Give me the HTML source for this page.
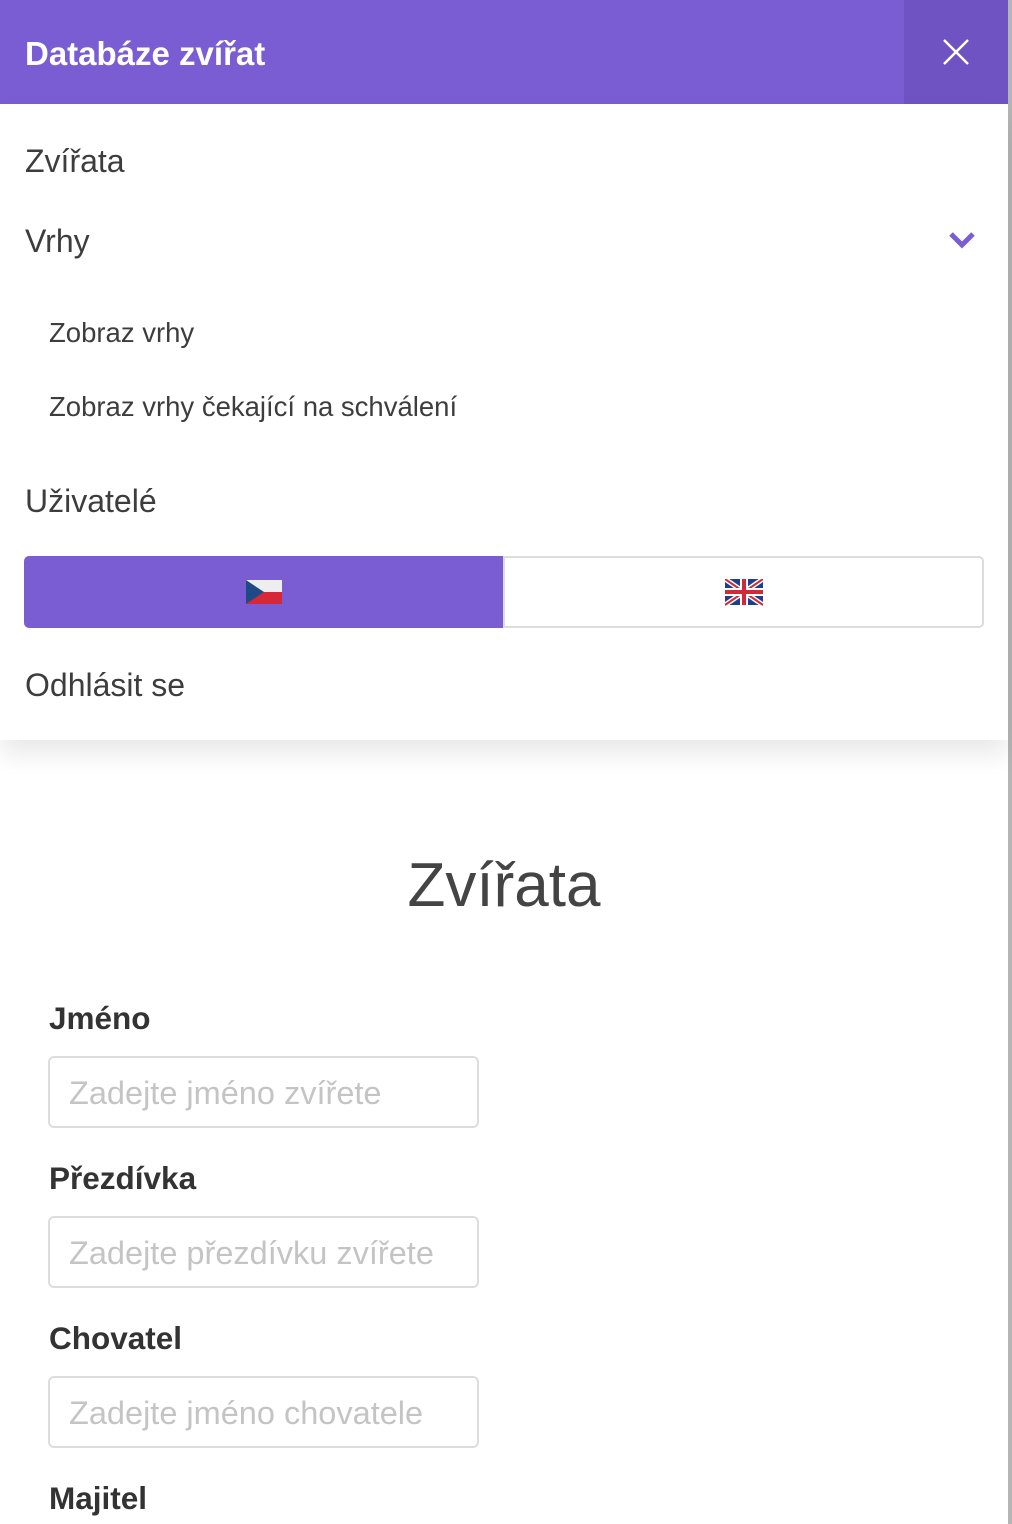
<!DOCTYPE html>
<html><head><meta charset="utf-8"><style>
*{margin:0;padding:0;box-sizing:border-box}
body{width:1012px;height:1524px;overflow:hidden;background:#fff;font-family:"Liberation Sans","DejaVu Sans",sans-serif;color:#3d3d3d;position:relative}
.sb{position:absolute;right:0;top:0;width:4px;height:1524px;background:#b5b5b5}
.hdr{position:absolute;left:0;top:0;width:1008px;height:104px;background:#7a5dd2}
.hdr h1{position:absolute;left:25px;top:35px;font-size:33px;font-weight:bold;color:#fff}
.cls{position:absolute;left:904px;top:0;width:104px;height:104px;background:#7053c3}
.it{position:absolute;left:25px;font-size:32px;color:#3d3d3d}
.sub{position:absolute;left:49px;font-size:27.5px;color:#3d3d3d}
.menu{position:absolute;left:0;top:104px;width:1008px;height:636px;background:#fff;box-shadow:0 14px 24px rgba(0,0,0,.09);z-index:2}
.flag{position:absolute;top:556px;height:72px}
.t{position:absolute;left:0;width:1008px;text-align:center;top:850px;font-size:62px;color:#444}
.lb{position:absolute;left:49px;font-size:31.5px;font-weight:bold;color:#333}
.in{position:absolute;left:48px;width:431px;height:72px;border:2px solid #ddd;border-radius:6px;font-size:32.5px;color:#c4c4c4;padding:17px 0 0 19px}
</style></head><body>
<div class="sb"></div>
<div class="hdr"><h1>Databáze zvířat</h1>
<div class="cls"><svg width="104" height="104"><path d="M40 40L64 64M64 40L40 64" stroke="#fff" stroke-width="2.5"/></svg></div></div>
<div class="menu">
<div class="it" style="top:39px">Zvířata</div>
<div class="it" style="top:119px">Vrhy</div>
<svg style="position:absolute;left:946px;top:124px" width="32" height="24"><path d="M5 6L16 17L27 6" fill="none" stroke="#7a5dd2" stroke-width="5"/></svg>
<div class="sub" style="top:213px">Zobraz vrhy</div>
<div class="sub" style="top:287px">Zobraz vrhy čekající na schválení</div>
<div class="it" style="top:379px">Uživatelé</div>
<div class="flag" style="top:452px;left:24px;width:479px;background:#7a5dd2;border-radius:5px 0 0 5px"><svg style="position:absolute;left:222px;top:23px" width="36" height="27"><rect x="0" y="1" width="36" height="12" fill="#eee"/><rect x="0" y="13" width="36" height="12" fill="#d7283a"/><path d="M0 1L18 13L0 25Z" fill="#1e4a86"/></svg></div>
<div class="flag" style="top:452px;left:503px;width:481px;border:2px solid #ddd;border-radius:0 5px 5px 0"><svg style="position:absolute;left:220px;top:21px" width="38" height="27"><rect width="38" height="26" fill="#1f3f8c"/><path d="M0 0L38 26M38 0L0 26" stroke="#fff" stroke-width="5"/><path d="M0 0L38 26M38 0L0 26" stroke="#d02a3a" stroke-width="2"/><path d="M19 0V26M0 13H38" stroke="#fff" stroke-width="8"/><path d="M19 0V26M0 13H38" stroke="#d02a3a" stroke-width="4"/></svg></div>
<div class="it" style="top:563px">Odhlásit se</div>
</div>
<div class="t">Zvířata</div>
<div class="lb" style="top:1000px">Jméno</div>
<div class="in" style="top:1056px">Zadejte jméno zvířete</div>
<div class="lb" style="top:1160px">Přezdívka</div>
<div class="in" style="top:1216px">Zadejte přezdívku zvířete</div>
<div class="lb" style="top:1320px">Chovatel</div>
<div class="in" style="top:1376px">Zadejte jméno chovatele</div>
<div class="lb" style="top:1480px">Majitel</div>
</body></html>
